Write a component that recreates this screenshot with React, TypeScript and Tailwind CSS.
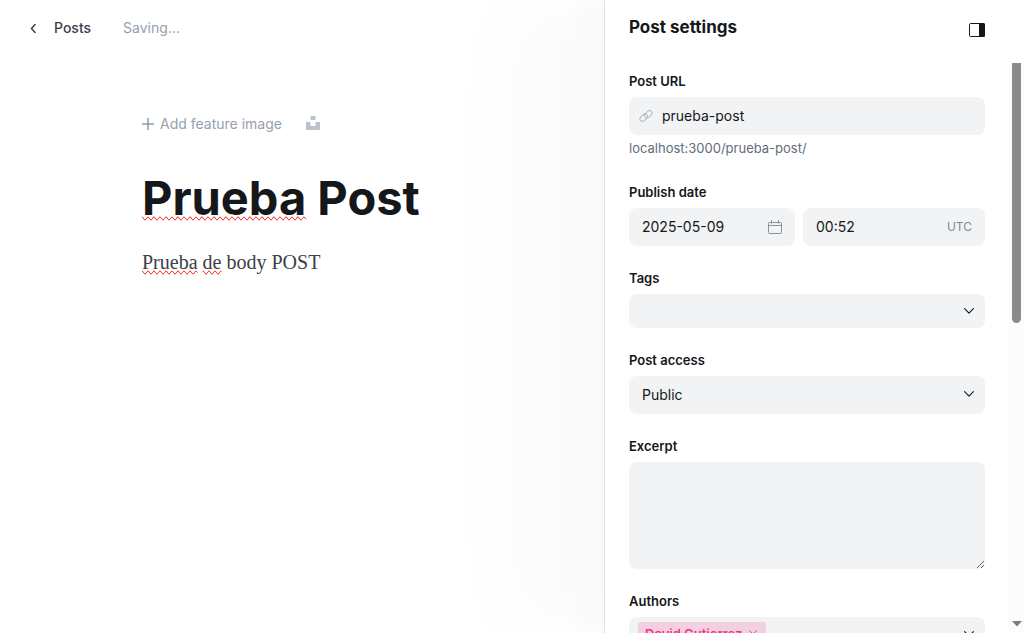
import React, { useState } from "react";

const fieldBox = "rounded-lg bg-[#f1f3f4] text-sm leading-5 text-[#15171a]";
const labelText = "mb-2 block text-[13px] font-semibold leading-4 text-[#15171a]";

function ChevronLeft() {
  return (
    <svg width="6" height="10" viewBox="0 0 6 10" fill="none" stroke="#394047" strokeWidth="1.5" strokeLinecap="round" strokeLinejoin="round" aria-hidden="true">
      <path d="M5 1.500 1.500 5.500 5 9.500" />
    </svg>
  );
}

function ChevronDown() {
  return (
    <svg width="10" height="6" viewBox="0 0 10 6" fill="none" stroke="#15171a" strokeWidth="1.1" strokeLinecap="round" strokeLinejoin="round" aria-hidden="true">
      <path d="M.6.600 5 5.200 9.400.600" />
    </svg>
  );
}

function PlusIcon() {
  return (
    <svg width="12" height="12" viewBox="0 0 12 12" fill="none" stroke="#8c9cab" strokeWidth="1.5" aria-hidden="true">
      <path d="M6 0v12M0 6h12" />
    </svg>
  );
}

function UnsplashIcon() {
  return (
    <svg width="14" height="14" viewBox="0 0 14 14" fill="#bcc3ca" aria-hidden="true">
      <path d="M4.500 0h5v4h-5zM0 6h4.500v4h5V6H14v8H0z" />
    </svg>
  );
}

function LinkIcon() {
  return (
    <svg width="14" height="14" viewBox="0 0 14 14" fill="none" stroke="#aeb7c1" strokeWidth="1" aria-hidden="true">
      <rect x="-4.200" y="-2.500" width="8.400" height="5" rx="2.500" transform="translate(4.700 8.700) rotate(-45)" />
      <rect x="-4.200" y="-2.500" width="8.400" height="5" rx="2.500" transform="translate(9.300 5.300) rotate(-45)" />
    </svg>
  );
}

function CalendarIcon() {
  return (
    <svg width="14" height="14" viewBox="0 0 14 14" fill="none" stroke="#8494a3" strokeWidth="1" aria-hidden="true">
      <rect x=".5" y="2.500" width="13" height="11" rx=".8" />
      <path d="M.5 5.500h13M3.500 0v3.500M10.500 0v3.500" />
    </svg>
  );
}

function SidebarIcon() {
  return (
    <svg width="16" height="14" viewBox="0 0 16 14" fill="none" aria-hidden="true">
      <rect x=".5" y=".5" width="15" height="13" rx="1.200" stroke="#15171a" />
      <path d="M10 0h4.500A1.500 1.500 0 0 1 16 1.500v11a1.500 1.500 0 0 1-1.500 1.500H10z" fill="#15171a" />
    </svg>
  );
}

function Misspelled({ children }: { children: React.ReactNode }) {
  return <span className="[text-decoration-line:spelling-error]">{children}</span>;
}

function Editor() {
  return (
    <main className="flex min-w-0 flex-1 flex-col">
      <header className="flex h-14 shrink-0 items-center pl-[30px] text-sm leading-5">
        <a href="#posts" className="flex items-center gap-[18px] font-medium text-[#394047]">
          <ChevronLeft />
          Posts
        </a>
        <span className="ml-8 text-[#95a1ad]">Saving...</span>
      </header>
      <div className="px-[142px] pt-[58px]">
        <div className="flex h-5 items-center">
          <button type="button" className="flex items-center gap-[6px] text-sm leading-5 text-[#95a1ad]">
            <PlusIcon />
            Add feature image
          </button>
          <button type="button" aria-label="Unsplash" className="ml-6 pb-0.5">
            <UnsplashIcon />
          </button>
        </div>
        <h1 contentEditable suppressContentEditableWarning spellCheck={false} className="mt-9 whitespace-nowrap text-[47px] font-bold leading-[56px] text-[#15171a] outline-none">
          <Misspelled>Prueba</Misspelled> Post
        </h1>
        <p contentEditable suppressContentEditableWarning spellCheck={false} className="mt-5 whitespace-nowrap font-['Liberation_Serif',serif] text-xl leading-8 text-[#394047] outline-none">
          <Misspelled>Prueba</Misspelled> <Misspelled>de</Misspelled> body POST
        </p>
      </div>
    </main>
  );
}

function Scrollbar() {
  return (
    <div aria-hidden="true" className="flex w-[15px] shrink-0 flex-col items-center justify-between bg-[#fcfcfc] pb-[6px]">
      <div className="h-[260px] w-[9px] rounded-b-full bg-[#8b8b8b]" />
      <svg width="10" height="6" viewBox="0 0 10 6" fill="#7d7d7d">
        <path d="M0 0h10L5 5.500z" />
      </svg>
    </div>
  );
}

function Settings() {
  const [slug, setSlug] = useState("prueba-post");
  const [date, setDate] = useState("2025-05-09");
  const [time, setTime] = useState("00:52");
  return (
    <aside className="flex w-[420px] shrink-0 flex-col border-l border-[#dfe3e7] bg-white shadow-[-3px_0_2px_rgba(0,0,0,0.004),-7px_0_5px_rgba(0,0,0,0.004),-12px_0_10px_rgba(0,0,0,0.004),-22px_0_18px_rgba(0,0,0,0.006),-42px_0_33px_rgba(0,0,0,0.008),-100px_0_80px_rgba(0,0,0,0.018)]">
      <header className="flex h-[63px] shrink-0 items-start justify-between pl-6 pr-[39px] pt-[15px]">
        <h2 className="text-[17px] font-bold leading-6">Post settings</h2>
        <button type="button" aria-label="Toggle settings" className="mt-2">
          <SidebarIcon />
        </button>
      </header>
      <div className="flex min-h-0 flex-1">
        <form className="flex min-w-0 flex-1 flex-col gap-6 overflow-hidden px-6 pt-[10px]">
          <div className="shrink-0">
            <label htmlFor="url" className={labelText}>Post URL</label>
            <div className={`flex h-[38px] items-center gap-[9px] pl-[10px] pr-3 ${fieldBox}`}>
              <LinkIcon />
              <input id="url" value={slug} onChange={(e) => setSlug(e.target.value)} className="min-w-0 flex-1 bg-transparent outline-none" />
            </div>
            <p className="mt-1 pb-[3px] text-[13px] leading-[18px] text-[#626d79]">localhost:3000/prueba-post/</p>
          </div>
          <div className="shrink-0">
            <label htmlFor="date" className={labelText}>Publish date</label>
            <div className="flex gap-2">
              <div className={`flex h-[38px] w-[166px] items-center px-[13px] ${fieldBox}`}>
                <input id="date" value={date} onChange={(e) => setDate(e.target.value)} className="min-w-0 flex-1 bg-transparent outline-none" />
                <CalendarIcon />
              </div>
              <div className={`flex h-[38px] min-w-0 flex-1 items-center px-[13px] ${fieldBox}`}>
                <input aria-label="Publish time" value={time} onChange={(e) => setTime(e.target.value)} className="min-w-0 flex-1 bg-transparent outline-none" />
                <span className="text-xs text-[#7c8b9a]">UTC</span>
              </div>
            </div>
          </div>
          <div className="shrink-0">
            <label htmlFor="tags" className={labelText}>Tags</label>
            <div className={`flex h-[34px] items-center pl-[13px] pr-[11px] ${fieldBox}`}>
              <input id="tags" className="min-w-0 flex-1 bg-transparent outline-none" />
              <ChevronDown />
            </div>
          </div>
          <div className="shrink-0">
            <label htmlFor="access" className={labelText}>Post access</label>
            <div className="grid items-center">
              <select id="access" className={`col-start-1 row-start-1 h-[38px] w-full appearance-none px-[13px] outline-none ${fieldBox}`}>
                <option>Public</option>
                <option>Members only</option>
                <option>Paid-members only</option>
              </select>
              <span className="pointer-events-none col-start-1 row-start-1 justify-self-end pb-0.5 pr-[11px]">
                <ChevronDown />
              </span>
            </div>
          </div>
          <div className="shrink-0">
            <label htmlFor="excerpt" className={labelText}>Excerpt</label>
            <textarea id="excerpt" className={`block h-[107px] w-full resize-y px-[13px] py-2 outline-none ${fieldBox}`} />
          </div>
          <div className="shrink-0">
            <label htmlFor="authors" className={labelText}>Authors</label>
            <div className={`flex h-[34px] items-center pl-[9px] pr-[11px] ${fieldBox}`}>
              <span className="flex h-6 items-center gap-[7px] whitespace-nowrap rounded-[3px] bg-[#f3d0df] pl-[7px] pr-[9px] text-[13px] font-semibold text-[#fb2d8d]">
                David Gutierrez
                <button type="button" aria-label="Remove David Gutierrez">
                  <svg width="8" height="8" viewBox="0 0 8 8" stroke="#fb2d8d" strokeWidth="1" fill="none" aria-hidden="true">
                    <path d="m.5.5 7 7m0-7-7 7" />
                  </svg>
                </button>
              </span>
              <input id="authors" className="min-w-0 flex-1 bg-transparent outline-none" />
              <ChevronDown />
            </div>
          </div>
        </form>
        <Scrollbar />
      </div>
    </aside>
  );
}

export default function App() {
  return (
    <div className="flex h-screen overflow-hidden bg-white font-['Inter',sans-serif] text-[#15171a]">
      <Editor />
      <Settings />
    </div>
  );
}
